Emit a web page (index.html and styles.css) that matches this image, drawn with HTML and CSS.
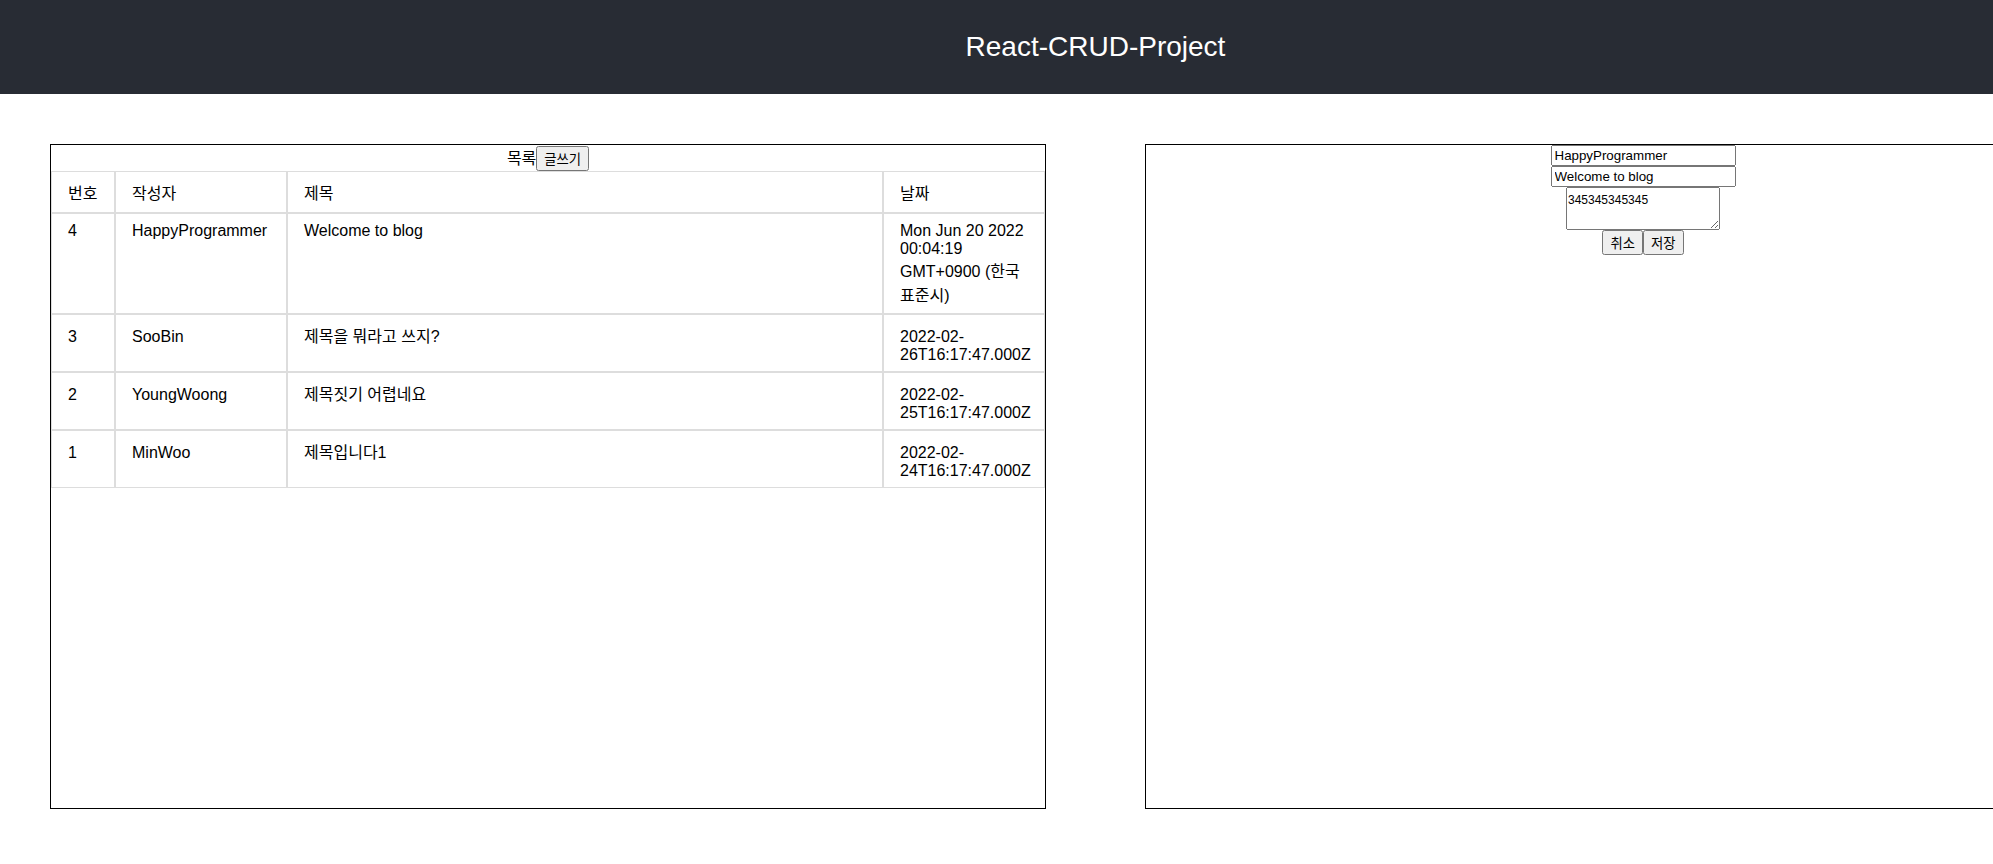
FILE: index.html
```html
<!DOCTYPE html>
<html lang="ko">
  <head>
    <meta charset="UTF-8" />
    <meta name="viewport" content="width=device-width, initial-scale=1.0" />
    <title>React App</title>
    <link rel="stylesheet" href="styles.css">
  </head>
  <body>
    <div class="App">
      <header class="App-header">React-CRUD-Project</header>
      <div class="App-body">
        <div class="board">
          <div class="board-head">목록<button>글쓰기</button></div>
          <table class="board-table">
            <thead>
              <tr>
                <th class="col-no">번호</th>
                <th class="col-writer">작성자</th>
                <th class="col-title">제목</th>
                <th>날짜</th>
              </tr>
            </thead>
            <tbody>
              <tr>
                <td>4</td>
                <td>HappyProgrammer</td>
                <td>Welcome to blog</td>
                <td>Mon Jun 20 2022 00:04:19 GMT+0900 (한국 표준시)</td>
              </tr>
              <tr>
                <td>3</td>
                <td>SooBin</td>
                <td>제목을 뭐라고 쓰지?</td>
                <td>2022-02-26T16:17:47.000Z</td>
              </tr>
              <tr>
                <td>2</td>
                <td>YoungWoong</td>
                <td>제목짓기 어렵네요</td>
                <td>2022-02-25T16:17:47.000Z</td>
              </tr>
              <tr>
                <td>1</td>
                <td>MinWoo</td>
                <td>제목입니다1</td>
                <td>2022-02-24T16:17:47.000Z</td>
              </tr>
            </tbody>
          </table>
        </div>
        <div class="board">
          <div class="editor">
            <input type="text" value="HappyProgrammer" />
            <input type="text" value="Welcome to blog" />
            <textarea>345345345345</textarea>
            <div class="editor-btns"><button>취소</button><button>저장</button></div>
          </div>
        </div>
      </div>
    </div>
  </body>
</html>
```

FILE: styles.css
```css
body {
  margin: 0;
  font-family: "Liberation Sans", "Noto Sans CJK KR", sans-serif;
}
button,
input {
  font-family: "Liberation Sans", "Noto Sans CJK KR", sans-serif;
  font-size: 13.333px;
}
.App {
  width: max-content;
  min-width: 100%;
}
.App-header {
  background-color: #282c34;
  color: white;
  height: 94px;
  display: flex;
  align-items: center;
  justify-content: center;
  font-size: 28px;
}
.App-body {
  display: flex;
  gap: 99px;
  padding: 50px;
}
.board {
  flex-shrink: 0;
  width: 996px;
  height: 665px;
  box-sizing: border-box;
  border: 1px solid black;
  text-align: center;
}
.board-table {
  width: 100%;
  border-spacing: 0;
  table-layout: fixed;
  text-align: left;
}
.board-table th,
.board-table td {
  box-sizing: border-box;
  border: 1px solid #ddd;
  padding: 8px 16px;
  font-weight: normal;
  vertical-align: baseline;
}
.board-table td {
  padding-bottom: 7px;
}
.col-no {
  width: 64px;
}
.col-writer {
  width: 172px;
}
.col-title {
  width: 596px;
}
.editor {
  display: flex;
  flex-direction: column;
  align-items: center;
}
.editor textarea {
  width: 154px;
  height: 43px;
  box-sizing: border-box;
  font-family: "Liberation Sans", sans-serif;
  font-size: 12px;
  padding: 5px 1px;
}
```
